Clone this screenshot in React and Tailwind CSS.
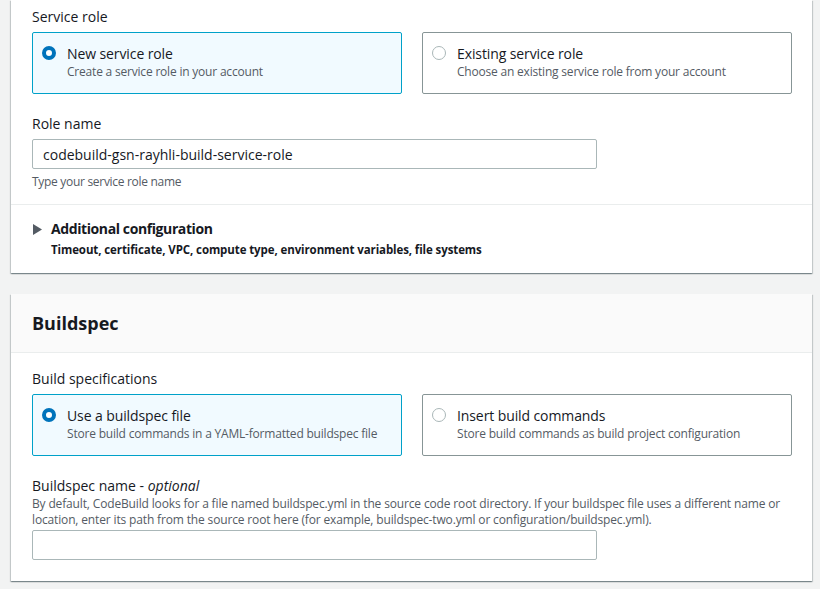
import React from 'react';

const font = { fontFamily: '"Open Sans", "Noto Sans", Arial, sans-serif' };

// Radio tile used for the role / buildspec choices
function RadioTile({ selected, title, desc }) {
  return (
    <div
      className={`flex h-[62px] w-[370px] shrink-0 items-start gap-[11px] rounded-[2px] border px-[9px] pt-[12px] ${
        selected ? 'border-[#00a1c9] bg-[#f1faff]' : 'border-[#879596] bg-white'
      }`}
    >
      <span
        className={`mt-[1px] block h-[14px] w-[14px] shrink-0 rounded-full ${
          selected ? 'border-[4px] border-[#0073bb] bg-white' : 'border border-[#aab7b8] bg-white'
        }`}
      />
      <div className="flex flex-col">
        <span className="text-[14px] leading-[18px] tracking-[-0.1px] text-[#16191f]">{title}</span>
        <span className="text-[12px] leading-[18px] tracking-[-0.2px] text-[#545b64]">{desc}</span>
      </div>
    </div>
  );
}

function TextInput({ value }) {
  return (
    <div className="flex h-[30px] w-[565px] items-center rounded-[2px] border border-[#aab7b8] bg-white px-[10px] text-[14px] text-[#16191f]">
      {value}
    </div>
  );
}

const card =
  'mx-[11px] w-[801px] bg-white shadow-[0_1px_1px_0_rgba(0,28,36,0.3),1px_1px_1px_0_rgba(0,28,36,0.15),-1px_1px_1px_0_rgba(0,28,36,0.15)]';

export default function App() {
  return (
    <div className="h-[589px] w-[820px] overflow-hidden bg-[#f2f3f3]" style={font}>
      {/* Service role card (top cut off) */}
      <div className={`${card} h-[273px]`}>
        <div className="pl-[21px] pr-[20px] pt-[7px]">
          <div className="text-[14px] leading-[20px] text-[#16191f]">Service role</div>
          <div className="mt-[5px] flex gap-[20px]">
            <RadioTile selected title="New service role" desc="Create a service role in your account" />
            <RadioTile title="Existing service role" desc="Choose an existing service role from your account" />
          </div>
          <div className="mt-[20px] text-[14px] leading-[20px] text-[#16191f]">Role name</div>
          <div className="mt-[5px]">
            <TextInput value="codebuild-gsn-rayhli-build-service-role" />
          </div>
          <div className="mt-[4px] text-[12px] leading-[18px] tracking-[-0.3px] text-[#545b64]">
            Type your service role name
          </div>
        </div>
        <div className="mt-[13px] border-t border-[#eaeded] px-[21px] pt-[14px]">
          <div className="flex items-center gap-[9px]">
            <svg width="9" height="11" viewBox="0 0 9 11" className="ml-[1px]">
              <path d="M0 0 L9 5.5 L0 11 Z" fill="#545b64" />
            </svg>
            <span className="text-[14px] font-bold leading-[20px] tracking-[-0.4px] text-[#16191f]">
              Additional configuration
            </span>
          </div>
          <div className="ml-[19px] mt-[2px] text-[11.5px] font-bold leading-[18px] tracking-[-0.1px] text-[#16191f]">
            Timeout, certificate, VPC, compute type, environment variables, file systems
          </div>
        </div>
      </div>

      {/* Buildspec card */}
      <div className={`${card} mt-[21px] h-[287px]`}>
        <div className="flex h-[59px] items-center border-b border-[#eaeded] bg-[#fafafa] px-[21px]">
          <h2 className="text-[18px] font-bold leading-[22px] text-[#16191f]">Buildspec</h2>
        </div>
        <div className="pl-[21px] pr-[20px] pt-[16px]">
          <div className="text-[14px] leading-[20px] text-[#16191f]">Build specifications</div>
          <div className="mt-[5px] flex gap-[20px]">
            <RadioTile selected title="Use a buildspec file" desc="Store build commands in a YAML-formatted buildspec file" />
            <RadioTile title="Insert build commands" desc="Store build commands as build project configuration" />
          </div>
          <div className="mt-[20px] text-[14px] leading-[20px] text-[#16191f]">
            Buildspec name - <i>optional</i>
          </div>
          <div className="text-[12px] leading-[16px] tracking-[-0.15px] text-[#545b64]">
            By default, CodeBuild looks for a file named buildspec.yml in the source code root directory. If your buildspec file uses a different name or location, enter its path from the source root here (for example, buildspec-two.yml or configuration/buildspec.yml).
          </div>
          <div className="mt-[2px]">
            <TextInput value="" />
          </div>
        </div>
      </div>
    </div>
  );
}
